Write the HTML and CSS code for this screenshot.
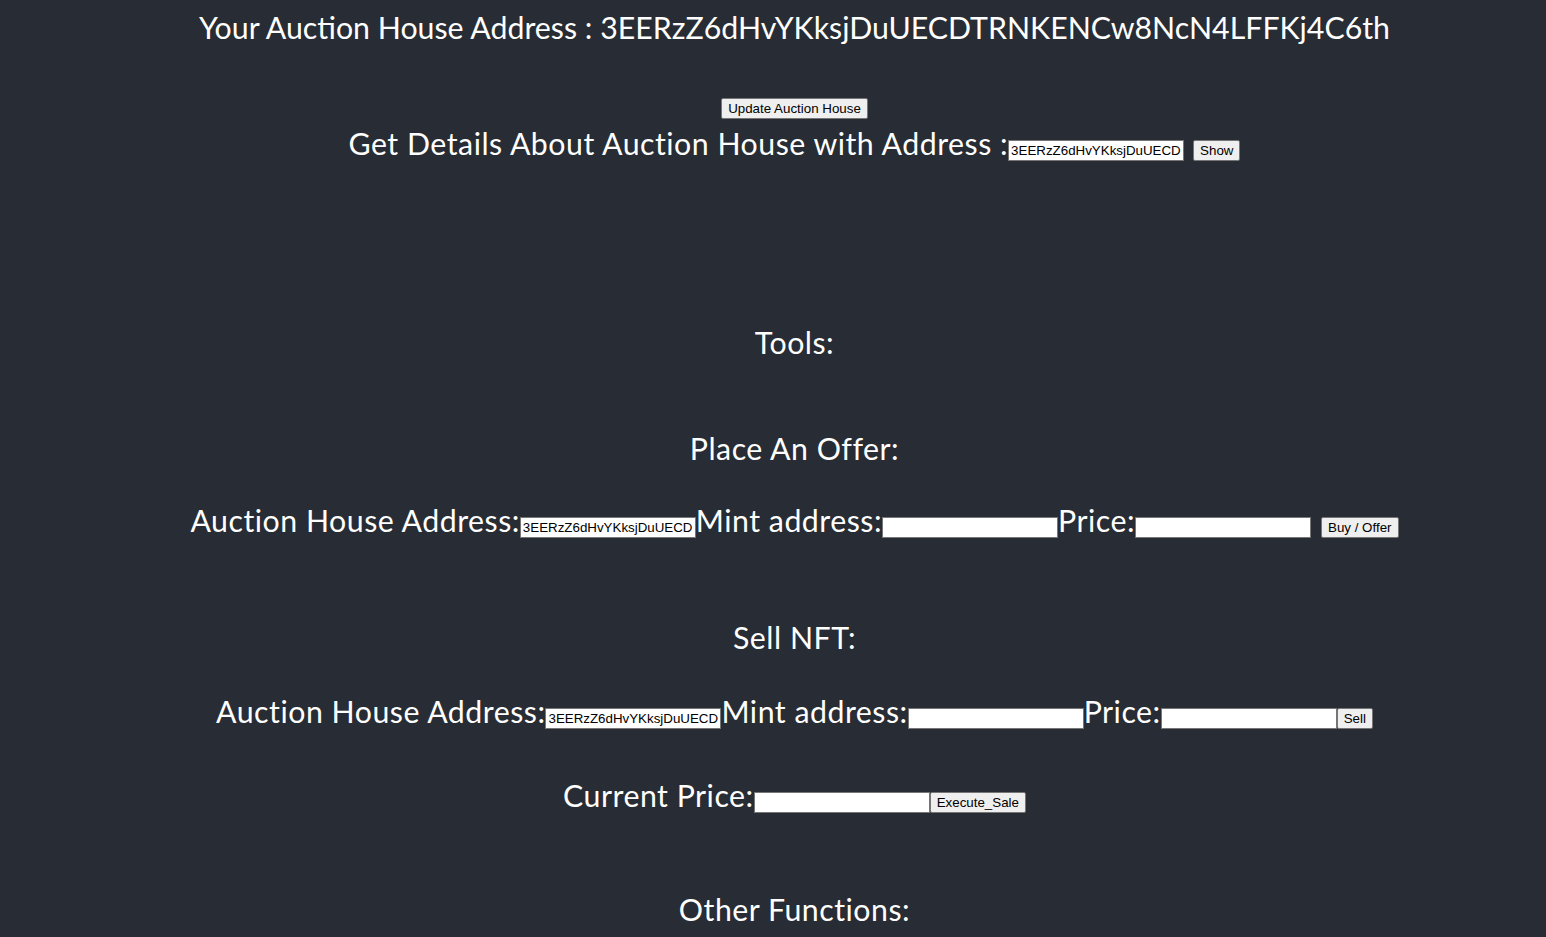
FILE: index.html
```html
<!DOCTYPE html>
<html>
<head>
<meta charset="utf-8">
<title>Auction House</title>
<link rel="stylesheet" href="styles.css">
</head>
<body>
<div class="app">
  <div class="line title">Your Auction House Address : 3EERzZ6dHvYKksjDuUECDTRNKENCw8NcN4LFFKj4C6th</div>
  <div class="btnrow"><button>Update Auction House</button></div>
  <div class="line details">Get Details About Auction House with Address :<input value="3EERzZ6dHvYKksjDuUECD"><button class="gap">Show</button></div>
  <div class="line tools">Tools:</div>
  <div class="line place">Place An Offer:</div>
  <div class="line row1">Auction House Address:<input value="3EERzZ6dHvYKksjDuUECD">Mint address:<input value="">Price:<input value=""><button class="gap">Buy / Offer</button></div>
  <div class="line sell">Sell NFT:</div>
  <div class="line row2">Auction House Address:<input value="3EERzZ6dHvYKksjDuUECD">Mint address:<input value="">Price:<input value=""><button>Sell</button></div>
  <div class="line current">Current Price:<input value=""><button>Execute_Sale</button></div>
  <div class="line other">Other Functions:</div>
</div>
</body>
</html>
```
FILE: styles.css
```css
html, body {
  margin: 0;
  padding: 0;
  background: #282c34;
}
.app {
  min-height: 937px;
  padding-left: 43px;
  background: #282c34;
  color: #ffffff;
  text-align: center;
  font-family: Lato, "Open Sans", sans-serif;
  font-size: 30.3px;
  box-sizing: border-box;
  overflow: hidden;
}
.line {
  line-height: 40px;
  white-space: nowrap;
  letter-spacing: 0.5px;
}
.line.title { letter-spacing: 0; }
input {
  box-sizing: border-box;
  width: 176px;
  height: 21px;
  margin: 0;
  padding: 1px 2px;
  border: 1px solid #767676;
  border-radius: 0;
  background: #ffffff;
  color: #000000;
  font-family: "Liberation Sans", Arial, sans-serif;
  font-size: 13.33px;
  letter-spacing: normal;
  vertical-align: baseline;
}
button {
  box-sizing: border-box;
  height: 21px;
  margin: 0;
  padding: 1px 6px;
  border: 1px solid #767676;
  border-radius: 2px;
  background: #efefef;
  color: #000000;
  font-family: "Liberation Sans", Arial, sans-serif;
  font-size: 13.33px;
  letter-spacing: normal;
  vertical-align: baseline;
}
.gap { margin-left: 9px; }
.row1 .gap { margin-left: 10px; }
.btnrow {
  display: flex;
  justify-content: center;
  height: 21px;
  margin-top: 51px;
}
.title { margin-top: 7px; }
.details { margin-top: 4px; }
.tools { margin-top: 159px; }
.place { margin-top: 66px; }
.row1 { margin-top: 32px; }
.sell { margin-top: 77px; }
.row2 { margin-top: 34px; }
.current { margin-top: 44px; }
.other { margin-top: 74px; }
```
